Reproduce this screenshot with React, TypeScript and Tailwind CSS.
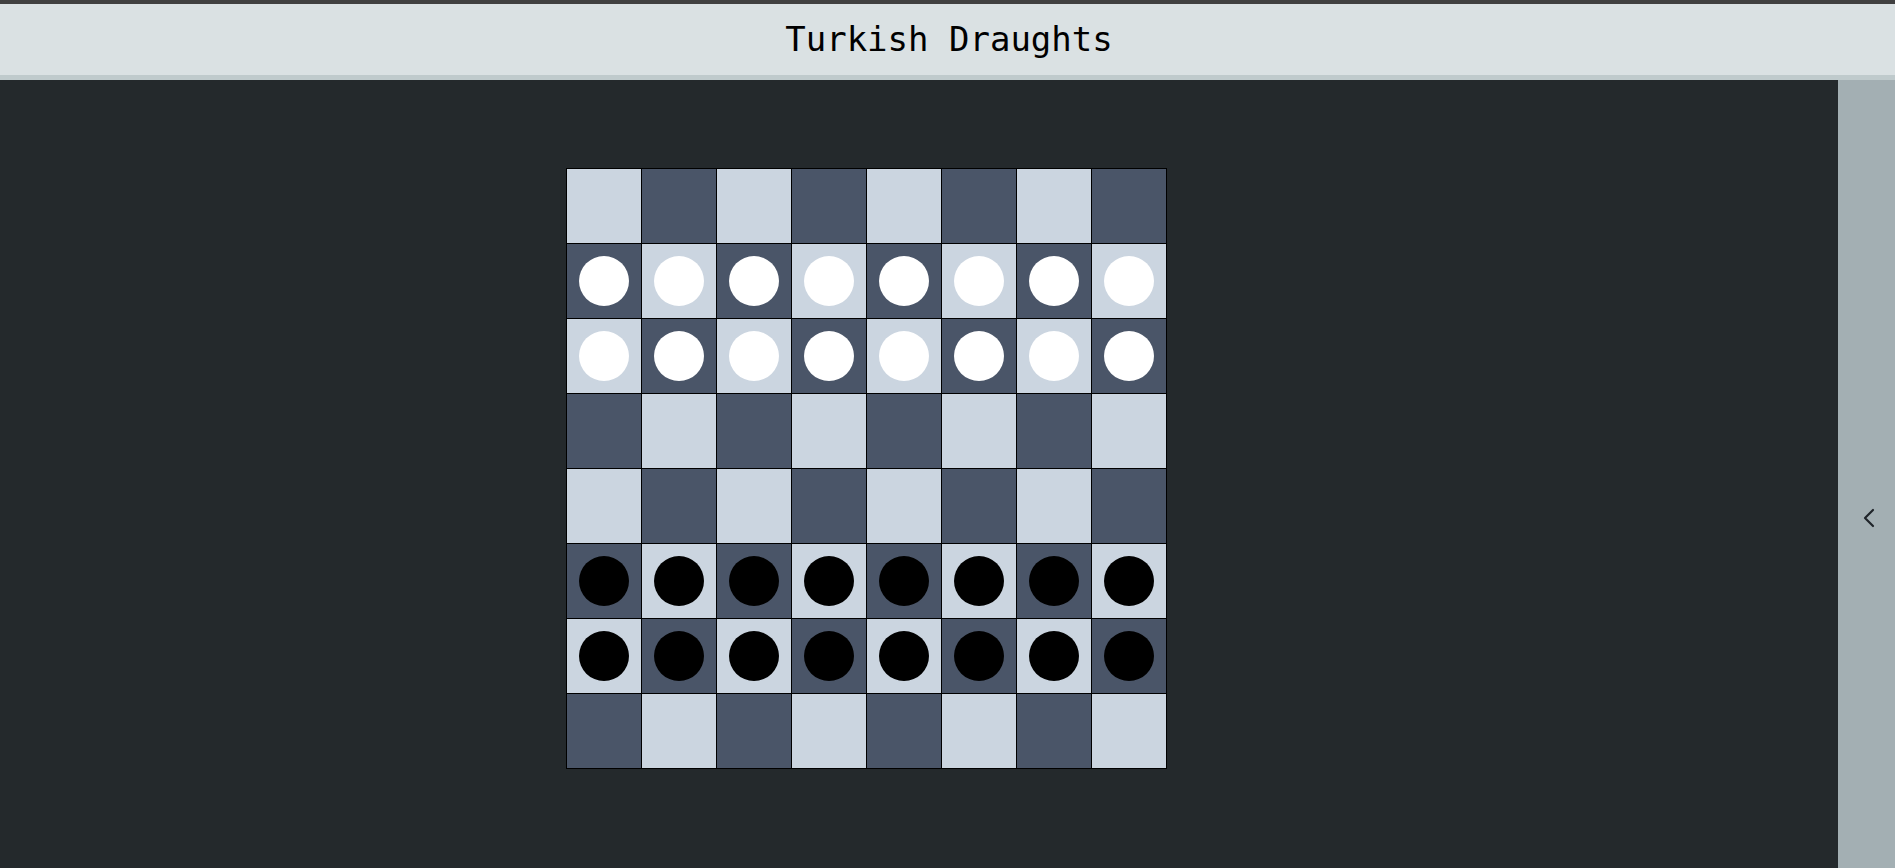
import { ChevronLeft } from 'lucide-react';

const rows = [0, 1, 2, 3, 4, 5, 6, 7];
const cols = [0, 1, 2, 3, 4, 5, 6, 7];

function pieceFor(row: number) {
  if (row === 1 || row === 2) return 'bg-white';
  if (row === 5 || row === 6) return 'bg-black';
  return null;
}

export default function App() {
  return (
    <div className="h-[868px] flex flex-col bg-[#24292c] overflow-hidden">
      {/* Header */}
      <header className="h-[80px] shrink-0 bg-[#dae1e3] border-t-4 border-t-[#404040] border-b-[5px] border-b-[#bfcacc] flex items-center justify-center">
        <h1 className="text-[34px] text-black font-['DejaVu_Sans_Mono',monospace] leading-none pb-[2px] pl-[3px]">
          Turkish Draughts
        </h1>
      </header>

      <div className="flex flex-1 min-h-0">
        {/* Board area */}
        <main className="flex-1 pl-[566px] pt-[88px]">
          <div className="grid grid-cols-[repeat(8,74px)] gap-px p-px bg-black w-fit">
            {rows.map((r) =>
              cols.map((c) => {
                const light = (r + c) % 2 === 0;
                const piece = pieceFor(r);
                return (
                  <div
                    key={`${r}-${c}`}
                    className={`h-[74px] w-[74px] flex items-center justify-center ${light ? 'bg-[#cbd5e0]' : 'bg-[#4a5568]'}`}
                  >
                    {piece && <div className={`w-[50px] h-[50px] rounded-full ${piece}`} />}
                  </div>
                );
              })
            )}
          </div>
        </main>

        {/* Side drawer */}
        <aside className="w-[57px] shrink-0 bg-[#a3afb3] flex justify-center pt-[422px] pl-[4px]">
          <ChevronLeft className="w-[32px] h-[32px] text-[#1f2429]" strokeWidth={1.6} />
        </aside>
      </div>
    </div>
  );
}
